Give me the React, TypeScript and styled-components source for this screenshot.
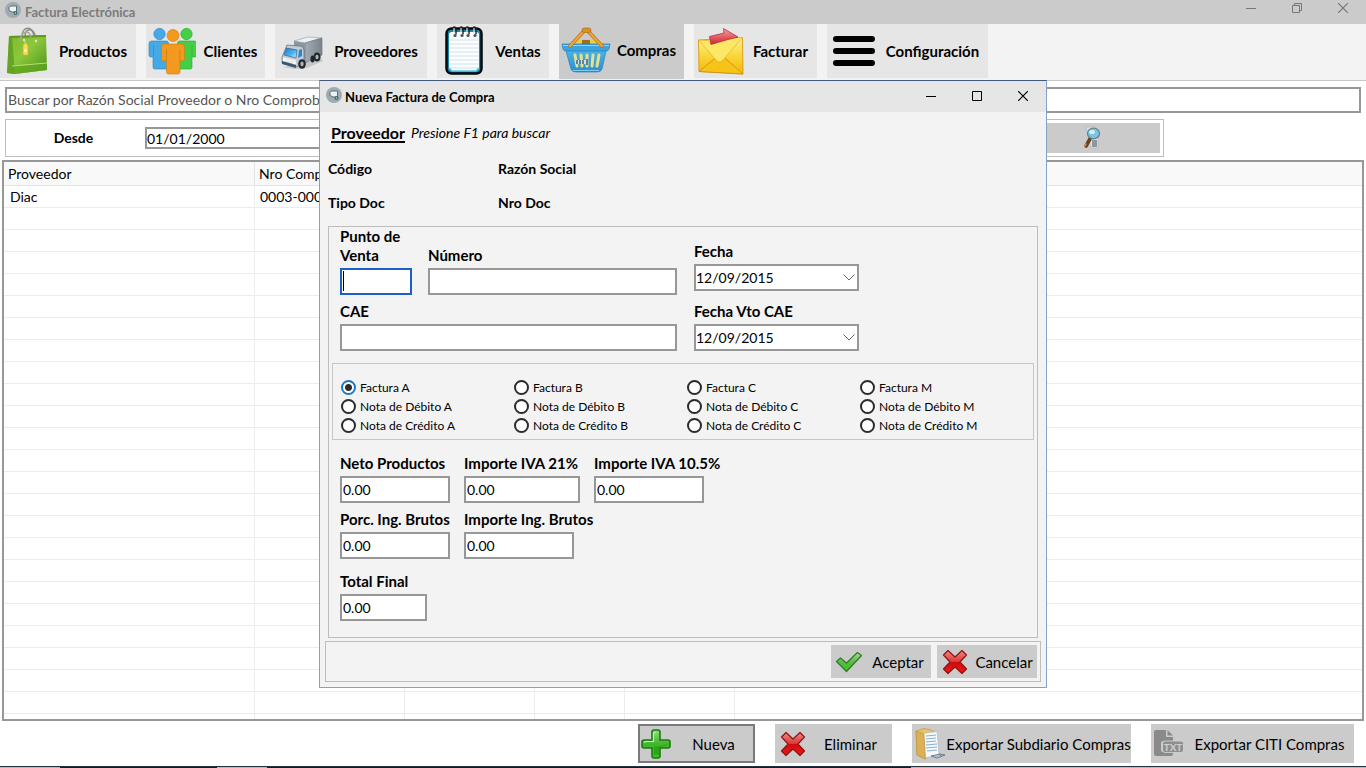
import React from "react";
import styled, { createGlobalStyle, css } from "styled-components";

const GlobalStyle = createGlobalStyle`
  *, *::before, *::after { box-sizing: border-box; }
  body {
    margin: 0;
    background: #fff;
    color: #000;
    font-family: Lato, "Open Sans", sans-serif;
    font-size: 14px;
    line-height: 20px;
  }
  button, input, select { font: inherit; color: inherit; border-radius: 0; margin: 0; }
  svg { display: block; flex: none; }
`;

/* ---------- Main window ---------- */

const Window = styled.div`
  display: flex;
  flex-direction: column;
  min-height: 100vh;
`;

const TitleBar = styled.header<{ $dialog?: boolean }>`
  display: flex;
  align-items: center;
  height: ${p => (p.$dialog ? 31 : 24)}px;
  padding-left: ${p => (p.$dialog ? 6 : 5)}px;
  gap: ${p => (p.$dialog ? 3 : 4)}px;
  background: ${p => (p.$dialog ? "#e6e6e6" : "#cbcbcb")};
  color: ${p => (p.$dialog ? "#000" : "#7b7b7b")};

  > svg { margin-bottom: 4px; }
`;

const TitleText = styled.h1`
  flex: 1;
  margin: 0;
  font-size: 13px;
  font-weight: 700;
  line-height: 20px;
`;

const CaptionButtons = styled.div<{ $dialog?: boolean }>`
  display: flex;
  padding-bottom: ${p => (p.$dialog ? 2 : 8)}px;
`;

const CaptionButton = styled.button`
  display: grid;
  place-items: center;
  width: 46px;
  height: 16px;
  padding: 0;
  border: 0;
  background: none;
`;

const Toolbar = styled.nav`
  display: flex;
  gap: 10px;
  height: 57px;
  background: #f3f3f3;
  border-bottom: 1px solid #c6c6c6;
`;

const ToolbarButton = styled.button<{ $width: number; $active?: boolean }>`
  display: flex;
  align-items: center;
  width: ${p => p.$width}px;
  height: ${p => (p.$active ? 55 : 54)}px;
  padding: ${p => (p.$active ? "0 0 4px" : "0")};
  border: 0;
  background: ${p => (p.$active ? "#cbcbcb" : "#e6e6e6")};
  font-size: 15px;
  font-weight: 700;
  white-space: nowrap;

  span { flex: 1; text-align: center; }
`;

const boxed = css`
  border: 2px solid #979797;
  background: #fff;
`;

const SearchInput = styled.input`
  ${boxed}
  height: 26px;
  margin: 6px 5px;
  padding: 0 1px 1px;

  &::placeholder { color: #555; opacity: 1; }
`;

const FilterPanel = styled.form`
  display: flex;
  align-items: center;
  width: 1159px;
  max-width: calc(100% - 10px);
  height: 38px;
  margin-left: 5px;
  padding-right: 3px;
  border: 1px solid #bdbdbd;
`;

const FilterLabel = styled.label`
  width: 139px;
  padding-right: 4px;
  text-align: center;
  font-weight: 700;
`;

const FilterDate = styled.input`
  ${boxed}
  width: 260px;
  height: 22px;
  padding: 0;
`;

const SearchButton = styled.button`
  display: grid;
  place-items: center;
  width: 136px;
  height: 30px;
  margin-left: auto;
  padding: 0;
  border: 0;
  background: #cbcbcb;
`;

const GridFrame = styled.main`
  flex: 1 1 0;
  min-height: 200px;
  margin: 3px 2px 0;
  overflow: hidden;
  border: 2px solid #979797;
`;

const DataTable = styled.table`
  width: 100%;
  table-layout: fixed;
  border-collapse: separate;
  border-spacing: 0;

  th, td {
    height: 22px;
    padding: 0 0 0 6px;
    border: 0 solid #ececec;
    border-width: 0 1px 1px 0;
    font-weight: 400;
    text-align: left;
    white-space: nowrap;
    line-height: 20px;
  }
  td + td { padding-left: 5px; }
  th {
    height: 24px;
    padding-left: 4px;
    border-color: #e4e4e4;
    background: #f9f9f9;
  }
  th:last-child, td:last-child { border-right: 0; }
`;

const FooterBar = styled.footer`
  display: flex;
  justify-content: flex-end;
  gap: 20px;
  padding: 3px 12px;
`;

const ActionButton = styled.button<{ $width: number; $tall?: boolean; $default?: boolean }>`
  display: flex;
  align-items: center;
  width: ${p => p.$width}px;
  height: ${p => (p.$tall ? 39 : 33)}px;
  padding: 0;
  border: 0;
  outline: ${p => (p.$default ? "2px solid #7a7a7a" : "none")};
  outline-offset: -2px;
  background: #cbcbcb;
  font-size: 15px;
  white-space: nowrap;

  span { flex: 1; text-align: center; }
`;

const IconCell = styled.i`
  display: grid;
  place-items: center;
  flex: none;
  width: 34px;
  padding-left: 2px;
`;

const ScreenEdge = styled.div`
  height: 2px;
  border-top: 1px solid #22303f;
  background: linear-gradient(
    to right,
    #a5bcd4 60px, #141c26 60px 217px, #a5bcd4 217px 267px, #141c26 267px 911px, #a5bcd4 911px
  );
`;

/* ---------- Dialog ---------- */

const Overlay = styled.div`
  position: absolute;
  inset: 0;
  display: flex;
  align-items: center;
  justify-content: center;
`;

const Dialog = styled.section`
  display: flex;
  flex-direction: column;
  width: 728px;
  border: 1px solid #86a1c2;
  border-top-color: #43587e;
  background: #f3f3f3;
`;

const ProviderHeading = styled.div`
  display: flex;
  align-items: center;
  gap: 6px;
  padding: 11px 11px 0;
`;

const ProviderTitle = styled.h2`
  margin: 0;
  font-size: 16px;
  line-height: 20px;
  text-decoration: underline 2px;
  text-underline-offset: 2px;
`;

const ProviderData = styled.dl`
  display: grid;
  grid-template-columns: 170px 1fr;
  row-gap: 14px;
  margin: 16px 8px 13px;

  dt { font-weight: 700; }
`;

const InvoiceGroup = styled.div`
  margin: 0 8px 3px;
  padding: 0 3px 16px;
  border: 1px solid #bdbdbd;
`;

const HeaderFields = styled.div`
  display: flex;
  gap: 17px;
  padding: 0 8px;
`;

const FieldColumn = styled.div<{ $gap: number; $top?: number }>`
  display: flex;
  flex-direction: column;
  gap: ${p => p.$gap}px;
  padding-top: ${p => p.$top ?? 0}px;
`;

const FieldRow = styled.div<{ $gap: number }>`
  display: flex;
  align-items: flex-end;
  gap: ${p => p.$gap}px;
`;

const FieldBox = styled.div<{ $width: number }>`
  display: flex;
  flex-direction: column;
  gap: 3px;
  width: ${p => p.$width}px;
`;

const FieldLabel = styled.label<{ $wrap?: boolean }>`
  font-size: 15px;
  font-weight: 700;
  line-height: 19px;
  white-space: ${p => (p.$wrap ? "normal" : "nowrap")};
`;

const FieldInput = styled.input<{ $focused?: boolean }>`
  ${boxed}
  width: 100%;
  height: 27px;
  padding: 0 1px 1px;
  ${p => p.$focused && css`
    border-color: #1d5fc4;
    background: linear-gradient(#000, #000) 1px 1px / 1px 20px no-repeat #fff;
  `}
`;

const DateBox = styled.div`
  display: grid;
  align-items: center;

  > * { grid-area: 1 / 1; }
  svg { justify-self: end; margin-right: 4px; pointer-events: none; }
`;

const DateSelect = styled.select`
  ${boxed}
  appearance: none;
  width: 100%;
  height: 27px;
  padding: 0;
`;

const TypeGroup = styled.fieldset`
  display: grid;
  grid-template-rows: repeat(3, 19px);
  grid-template-columns: 173px 173px 173px 1fr;
  grid-auto-flow: column;
  margin: 12px 0 14px;
  padding: 14px 8px 4px;
  border: 1px solid #c6c6c6;
`;

const RadioLabel = styled.label`
  display: flex;
  align-items: center;
  gap: 4px;
  font-size: 12px;
`;

const Radio = styled.input`
  appearance: none;
  width: 15px;
  height: 15px;
  border: 2px solid #2b2b2b;
  border-radius: 50%;
  background: #fff;

  &:checked {
    border-color: #1a78cc;
    background: radial-gradient(circle, #2b2b2b 3px, #fff 4px);
  }
`;

const Amounts = styled.div`
  display: flex;
  flex-direction: column;
  gap: 7px;
  padding: 0 8px;
`;

const TotalRow = styled.div`
  padding-top: 6px;
`;

const DialogActions = styled.footer`
  display: flex;
  justify-content: flex-end;
  gap: 6px;
  margin: 0 5px 5px;
  padding: 3px;
  border: 1px solid #bdbdbd;
`;

/* ---------- Icons ---------- */

const AppIcon = () => (
  <svg width="16" height="16" viewBox="0 0 16 16">
    <circle cx="8" cy="8" r="8" fill="#9dabb3" />
    <path d="M5.500 4h6v6H7L4 8.500V5.500z" fill="#eef2f3" stroke="#5f6f78" strokeWidth="1" />
    <circle cx="10.500" cy="11" r="2" fill="#3f6e6a" />
    <circle cx="10.500" cy="11" r=".7" fill="#cfe0de" />
  </svg>
);

const MinimizeIcon = ({ color }: { color: string }) => (
  <svg width="10" height="10"><path d="M0 5.500h10" stroke={color} /></svg>
);
const MaximizeIcon = ({ color }: { color: string }) => (
  <svg width="10" height="10"><path d="M.5.5h9v9h-9z" fill="none" stroke={color} /></svg>
);
const RestoreIcon = ({ color }: { color: string }) => (
  <svg width="10" height="10"><path d="M.5 2.500h7v7h-7zM2.500 2.500v-2h7v7h-2" fill="none" stroke={color} /></svg>
);
const CloseIcon = ({ color }: { color: string }) => (
  <svg width="10" height="10"><path d="M0 0l10 10M10 0l-10 10" stroke={color} strokeWidth="1.200" /></svg>
);
const ChevronIcon = () => (
  <svg width="12" height="7"><path d="M.5.5L6 6l5.500-5.500" fill="none" stroke="#666" /></svg>
);

const BagIcon = () => (
  <svg width="50" height="54" viewBox="0 0 50 54">
    <defs>
      <linearGradient id="bag" x1="0" y1="0" x2="1" y2="1">
        <stop offset="0" stopColor="#7fb82a" /><stop offset=".45" stopColor="#8cc83c" /><stop offset="1" stopColor="#4a9018" />
      </linearGradient>
    </defs>
    <path d="M22 13C22 2 32 1 34 12M25 12C25 3 35 3 36 16" fill="none" stroke="#8d8d86" strokeWidth="1.500" />
    <path d="M9 12L46 11L47 46L15 50L7 49Z" fill="url(#bag)" />
    <path d="M9 12L12 13L15 50L7 49Z" fill="#4f8c1c" opacity=".6" />
    <path d="M9 12L46 11L46 13L12 14Z" fill="#5c9a22" />
    <path d="M8 43L14 42L47 39L47 46L15 50L7 49Z" fill="#5fa51e" opacity=".7" />
    <path d="M12 42L47 39" stroke="#b8e070" strokeWidth="1" />
    <path d="M20 18C20 8 29 4 31 13" fill="none" stroke="#a6a69e" strokeWidth="1.500" />
    <circle cx="24" cy="16" r="1.200" fill="#dfe8cf" /><circle cx="36" cy="17" r="1.200" fill="#dfe8cf" />
    <path d="M25 16v4" stroke="#c9d8a4" />
    <path d="M23 21l2.500-2L28 21v10h-5z" fill="#f4dd52" stroke="#d9a82c" strokeWidth=".6" />
    <path d="M24 25h3v3h-3z" fill="#f7ecb0" />
  </svg>
);

const PeopleIcon = () => (
  <svg width="50" height="54" viewBox="0 0 50 54">
    <g fill="#45a9e6" stroke="#2b83bd" strokeWidth=".6">
      <circle cx="13.500" cy="10" r="5.700" />
      <path d="M5.500 17h15q2 0 2 2v26h-14q-1.500 0-1.500-2V33H5q-2 0-2-2V20q0-3 2.500-3z" />
    </g>
    <g fill="#45cf45" stroke="#2da32f" strokeWidth=".6">
      <circle cx="40.500" cy="10" r="5.700" />
      <path d="M48.500 17h-15q-2 0-2 2v26h13q1.500 0 1.500-2V33h2.500q2 0 2-2V20q0-3-2-3z" />
    </g>
    <g fill="#f39a1e" stroke="#c97a10" strokeWidth=".6">
      <circle cx="27" cy="11.500" r="6" />
      <path d="M18 20h18q2.500 0 2.500 3v12q0 2-2 2H34v11q0 2-2 2H22.500q-2 0-2-2V37H18q-2.500 0-2.500-2V23q0-3 2.500-3z" />
    </g>
    <path d="M7.500 21v11M46 21v11M20.500 25v12M33.800 25v12" stroke="#0002" />
  </svg>
);

const TruckIcon = () => (
  <svg width="50" height="54" viewBox="0 0 50 54">
    <defs>
      <linearGradient id="box" x1="0" x2="1"><stop offset="0" stopColor="#a4adb5" /><stop offset="1" stopColor="#77828c" /></linearGradient>
      <linearGradient id="glass" x1="0" y1="0" x2="1" y2="1"><stop offset="0" stopColor="#1978d0" /><stop offset=".6" stopColor="#4fb6f2" /><stop offset="1" stopColor="#d4f2ff" /></linearGradient>
    </defs>
    <path d="M8 43l38-9 2 3-16 7-12 1z" fill="#0002" />
    <path d="M19 17L33 13L47 14L30 19Z" fill="#eef1f3" stroke="#8e979f" strokeWidth=".6" />
    <path d="M30 19L47 14V31L30 39Z" fill="url(#box)" stroke="#69747e" strokeWidth=".6" />
    <path d="M19 17L30 19V39L19 30Z" fill="#8c969f" />
    <path d="M12 21L24 22Q29 22 29 27V39L21 43L7 39V33Z" fill="#c3cbd2" stroke="#5e6972" strokeWidth=".7" />
    <path d="M11.500 24L22 26L21 34L9 31Z" fill="url(#glass)" stroke="#24547c" strokeWidth=".6" />
    <path d="M24 26l3-1v7l-4 2z" fill="#2a86cf" />
    <path d="M8 33l13 3v4L8 37z" fill="#e9edf0" />
    <path d="M7 37l14 4v3L7 40z" fill="#38586f" />
    <circle cx="9" cy="36" r="1.200" fill="#fff" /><circle cx="19.500" cy="39" r="1.200" fill="#fff" />
    <g fill="#20262b"><ellipse cx="27" cy="40" rx="3.800" ry="4.800" /><ellipse cx="42" cy="33" rx="3.600" ry="4.600" /><ellipse cx="37.500" cy="35" rx="2" ry="3.500" /></g>
    <g fill="#aab3ba"><ellipse cx="27" cy="40" rx="1.700" ry="2.400" /><ellipse cx="42" cy="33" rx="1.600" ry="2.300" /></g>
  </svg>
);

const NotepadIcon = () => (
  <svg width="50" height="54" viewBox="0 0 50 54">
    <rect x="9.500" y="4.500" width="35" height="45" rx="5" fill="#1a86a8" stroke="#05090c" strokeWidth="2.500" />
    <path d="M12 11q0-3 3-3h24q3 0 3 3v33l-3 3H15l-3-3z" fill="#fbfdfe" />
    <path d="M12 16h30M12 20h30M12 24h30M12 28h30M12 32h30M12 36h30M12 40h30M12 44h30" stroke="#cde4ee" />
    <path d="M12 44l3 3h24l3-3" fill="none" stroke="#5fc8e0" strokeWidth="1.500" />
    {[17, 24, 30, 37].map(x => (
      <g key={x}>
        <path d={`M${x - 1} 3.500q3-1.500 3 2v5`} fill="none" stroke="#222" strokeWidth="1.400" />
        <path d={`M${x} 4v6`} stroke="#e8e8e8" strokeWidth="1.200" />
        <circle cx={x + 1} cy="11.500" r="1.600" fill="#4b5960" />
      </g>
    ))}
  </svg>
);

const BasketIcon = () => (
  <svg width="50" height="54" viewBox="0 0 50 54" overflow="visible">
    <defs>
      <linearGradient id="basket" x1="0" y1="0" x2="0" y2="1"><stop offset="0" stopColor="#4eb6ea" /><stop offset="1" stopColor="#2c8fd0" /></linearGradient>
    </defs>
    <path d="M14 20l5-4h20l5 4v3H14z" fill="#e7cf55" />
    <path d="M23 17h8v4h-8z" fill="#9b6f1d" />
    <path d="M6.500 26H47.500L43 46Q42 49 38 49H17Q13 49 12 46Z" fill="url(#basket)" stroke="#2a7fb5" strokeWidth=".7" />
    <path d="M3 21H51L50 26Q49.500 28 47 28H7Q4.500 28 4 26Z" fill="#3ba4df" stroke="#2a7fb5" strokeWidth=".7" />
    <path d="M4 22.500h46" stroke="#8fd6f7" />
    <path d="M11 23L26 7M43 23L28 7" fill="none" stroke="#b8721a" strokeWidth="3.600" strokeLinecap="round" />
    <path d="M11 23L26 7M43 23L28 7" fill="none" stroke="#f0a53a" strokeWidth="2.200" strokeLinecap="round" />
    <rect x="23" y="5" width="9" height="4.500" rx="2" fill="#d98f2c" stroke="#a9681a" strokeWidth=".6" />
    <path d="M16 32l2 11M22 32l1 11M28 32v11M34 32l-1 11M40 32l-2 11" stroke="#e6e08a" strokeWidth="3" strokeLinecap="round" />
    <path d="M16 37h12v4H17z" fill="#cfe3ee" />
    <path d="M18 37v4M21 37v4M24 37v4M28 36v6" stroke="#24404f" strokeWidth="1.200" />
    <path d="M14 47.500h26" stroke="#7fcdf2" />
  </svg>
);

const EnvelopeIcon = () => (
  <svg width="50" height="54" viewBox="0 0 50 54">
    <defs>
      <linearGradient id="env" x1="0" y1="0" x2="0" y2="1"><stop offset="0" stopColor="#fff0a0" /><stop offset=".5" stopColor="#fbd638" /><stop offset="1" stopColor="#f3b606" /></linearGradient>
      <linearGradient id="arrow" x1="0" y1="0" x2="0" y2="1"><stop offset="0" stopColor="#f3a0a4" /><stop offset="1" stopColor="#d4222c" /></linearGradient>
    </defs>
    <path d="M4.500 16L48.500 13.500L49 50L5 47.500Z" fill="url(#env)" stroke="#d79a12" strokeWidth=".9" />
    <path d="M5 47.500L21 34L26 38L31 34L49 50Z" fill="#f6c418" stroke="#c98d10" strokeWidth=".8" />
    <path d="M4.500 16L17 17L45 13.500L48.500 13.500L29 36Q25.500 40 22 36Z" fill="#fde766" stroke="#e8b52a" strokeWidth=".8" />
    <path d="M15.500 12.500L30 9L29.500 4.500L44 13L34 15.500L17 20.500Z" fill="url(#arrow)" stroke="#b9303a" strokeWidth=".8" />
  </svg>
);

const BarsIcon = () => (
  <svg width="50" height="54" viewBox="0 0 50 54">
    <path d="M9 15h36M9 27h36M9 39h36" stroke="#000" strokeWidth="6" strokeLinecap="round" />
  </svg>
);

const MagnifierIcon = () => (
  <svg width="18" height="24" viewBox="0 0 18 24">
    <path d="M3 1h9l3 4v17H8z" fill="#dfe3e6" stroke="#aab0b5" strokeWidth=".6" />
    <path d="M9 14h5v7H9z" fill="#8f979e" />
    <path d="M7 13l-4 7" stroke="#6b3f1a" strokeWidth="3.600" strokeLinecap="round" />
    <path d="M3 18l-1 2" stroke="#c99a4c" strokeWidth="1.500" strokeLinecap="round" />
    <ellipse cx="10.500" cy="7.500" rx="6" ry="5.300" fill="#7cc4e4" stroke="#64808f" strokeWidth="1.200" />
    <ellipse cx="9" cy="6" rx="3" ry="2" fill="#d5f0fa" />
  </svg>
);

const PlusIcon = () => (
  <svg width="30" height="30" viewBox="0 0 30 30">
    <defs>
      <linearGradient id="plus" x1="0" y1="0" x2="0" y2="1"><stop offset="0" stopColor="#8fdc7c" /><stop offset=".5" stopColor="#42b52c" /><stop offset="1" stopColor="#3cc41a" /></linearGradient>
    </defs>
    <path d="M13 1h4q2 0 2 2v8h8q2 0 2 2v4q0 2-2 2h-8v8q0 2-2 2h-4q-2 0-2-2v-8H3q-2 0-2-2v-4q0-2 2-2h8V3q0-2 2-2z" fill="url(#plus)" stroke="#1b7a14" strokeWidth="1.600" />
    <path d="M3.500 14q0-1.500 1.500-1.500h7.500V4.500q0-1 2.500-1" fill="none" stroke="#c3f2b6" strokeWidth="1.200" />
    <path d="M13 17q8 1 14-3-1 3-9 4v8h-5z" fill="#1f9410" opacity=".6" />
  </svg>
);

const CrossIcon = () => (
  <svg width="26" height="26" viewBox="0 0 26 26">
    <defs>
      <linearGradient id="cross" x1="0" y1="0" x2="0" y2="1"><stop offset="0" stopColor="#f08a86" /><stop offset=".48" stopColor="#d93a38" /><stop offset=".52" stopColor="#d00a0c" /><stop offset="1" stopColor="#f01a14" /></linearGradient>
    </defs>
    <path d="M6 1.500L13 8L20 1.500L24.500 6L18 13L24.500 20L20 24.500L13 18L6 24.500L1.500 20L8 13L1.500 6Z" fill="url(#cross)" stroke="#8e1416" strokeWidth="1.200" strokeLinejoin="round" />
  </svg>
);

const CheckIcon = () => (
  <svg width="28" height="22" viewBox="0 0 28 22">
    <defs>
      <linearGradient id="check" x1="0" y1="0" x2="0" y2="1"><stop offset="0" stopColor="#a8dc98" /><stop offset=".5" stopColor="#5cb84a" /><stop offset="1" stopColor="#3cc41a" /></linearGradient>
    </defs>
    <path d="M1.500 10.500L5.500 7L11.500 12L22.500 1.500L26.500 4.500L11.500 20.500Z" fill="url(#check)" stroke="#2b7d20" strokeWidth="1.200" strokeLinejoin="round" />
  </svg>
);

const FolderIcon = () => (
  <svg width="31" height="32" viewBox="0 0 31 32">
    <path d="M1 3L9 .500L16 2L20 4V25L10 31L2 27Z" fill="#e8c36c" stroke="#b98f3c" strokeWidth=".6" />
    <path d="M8 5.500L22 3.500L24 27L10 30Z" fill="#f6f9fb" stroke="#a9b8c4" strokeWidth=".6" />
    <path d="M11 8l10-1M11 11l10-1M11 14l10-1M11 17l11-1M11 20l11-1M12 23l10-1" stroke="#8db0cf" strokeWidth="1.200" />
    <path d="M1 3L9 6L10.500 31L2 27Z" fill="#dcb056" stroke="#b98f3c" strokeWidth=".6" />
    <path d="M16 28l9-2 5 1-8 3zM24 26l3 3" fill="#b7c2cc" stroke="#5d6b78" strokeWidth=".8" />
  </svg>
);

const TxtFileIcon = () => (
  <svg width="31" height="27" viewBox="0 0 31 27">
    <path d="M0 2q0-2 2-2h10v7h7v4H9q-2 0-2 2v7q0 2 2 2h10v2q0 2-2 2H2q-2 0-2-2zM13.500 0L19 5.500h-5.500z" fill="#8a8a8a" />
    <rect x="8.500" y="11" width="21" height="11.500" rx="2.500" fill="#8f8f8f" stroke="#d8d8d8" strokeWidth=".8" />
    <text x="19" y="20.500" textAnchor="middle" fontFamily="Lato, sans-serif" fontSize="10" fontStyle="normal" fontWeight="700" fill="#d0d0d0">TXT</text>
  </svg>
);

/* ---------- Parts ---------- */

const toolbarItems = [
  { label: "Productos", width: 136, icon: <BagIcon /> },
  { label: "Clientes", width: 119, icon: <PeopleIcon /> },
  { label: "Proveedores", width: 152, icon: <TruckIcon /> },
  { label: "Ventas", width: 112, icon: <NotepadIcon /> },
  { label: "Compras", width: 125, icon: <BasketIcon />, active: true },
  { label: "Facturar", width: 123, icon: <EnvelopeIcon /> },
  { label: "Configuración", width: 161, icon: <BarsIcon /> },
];

const columnWidths = [251, 150, 130, 90, 110];
const emptyRows = Array.from({ length: 24 }, (_, i) => i);
const voucherTypes = ["A", "B", "C", "M"].flatMap(letter =>
  ["Factura", "Nota de Débito", "Nota de Crédito"].map(kind => `${kind} ${letter}`),
);

type FieldProps = { id: string; label: string; width: number; value?: string; focused?: boolean; wrap?: boolean };

const Field = ({ id, label, width, value = "", focused, wrap }: FieldProps) => (
  <FieldBox $width={width}>
    <FieldLabel htmlFor={id} $wrap={wrap}>{label}</FieldLabel>
    <FieldInput id={id} defaultValue={value} $focused={focused} />
  </FieldBox>
);

const DateField = ({ id, label }: { id: string; label: string }) => (
  <FieldBox $width={165}>
    <FieldLabel htmlFor={id}>{label}</FieldLabel>
    <DateBox>
      <DateSelect id={id}><option>12/09/2015</option></DateSelect>
      <ChevronIcon />
    </DateBox>
  </FieldBox>
);

const PurchaseDialog = () => (
  <Overlay>
    <Dialog role="dialog" aria-labelledby="dialog-title">
      <TitleBar $dialog>
        <AppIcon />
        <TitleText as="h2" id="dialog-title">Nueva Factura de Compra</TitleText>
        <CaptionButtons $dialog>
          <CaptionButton aria-label="Minimizar"><MinimizeIcon color="#000" /></CaptionButton>
          <CaptionButton aria-label="Maximizar"><MaximizeIcon color="#000" /></CaptionButton>
          <CaptionButton aria-label="Cerrar"><CloseIcon color="#000" /></CaptionButton>
        </CaptionButtons>
      </TitleBar>
      <ProviderHeading>
        <ProviderTitle>Proveedor</ProviderTitle>
        <em>Presione F1 para buscar</em>
      </ProviderHeading>
      <ProviderData>
        <dt>Código</dt><dt>Razón Social</dt>
        <dt>Tipo Doc</dt><dt>Nro Doc</dt>
      </ProviderData>
      <InvoiceGroup>
        <HeaderFields>
          <FieldColumn $gap={7}>
            <FieldRow $gap={16}>
              <Field id="punto" label="Punto de Venta" width={72} focused wrap />
              <Field id="numero" label="Número" width={249} />
            </FieldRow>
            <Field id="cae" label="CAE" width={337} />
          </FieldColumn>
          <FieldColumn $gap={11} $top={15}>
            <DateField id="fecha" label="Fecha" />
            <DateField id="vto" label="Fecha Vto CAE" />
          </FieldColumn>
        </HeaderFields>
        <TypeGroup aria-label="Tipo de comprobante">
          {voucherTypes.map((name, i) => (
            <RadioLabel key={name}>
              <Radio type="radio" name="tipo" defaultChecked={i === 0} />
              {name}
            </RadioLabel>
          ))}
        </TypeGroup>
        <Amounts>
          <FieldRow $gap={14}>
            <Field id="neto" label="Neto Productos" width={110} value="0.00" />
            <Field id="iva21" label="Importe IVA 21%" width={116} value="0.00" />
            <Field id="iva10" label="Importe IVA 10.5%" width={110} value="0.00" />
          </FieldRow>
          <FieldRow $gap={14}>
            <Field id="porc" label="Porc. Ing. Brutos" width={110} value="0.00" />
            <Field id="brutos" label="Importe Ing. Brutos" width={110} value="0.00" />
          </FieldRow>
          <TotalRow>
            <Field id="total" label="Total Final" width={87} value="0.00" />
          </TotalRow>
        </Amounts>
      </InvoiceGroup>
      <DialogActions>
        <ActionButton $width={100}><IconCell><CheckIcon /></IconCell><span>Aceptar</span></ActionButton>
        <ActionButton $width={100}><IconCell><CrossIcon /></IconCell><span>Cancelar</span></ActionButton>
      </DialogActions>
    </Dialog>
  </Overlay>
);

export default function App() {
  return (
    <>
      <GlobalStyle />
      <Window>
        <TitleBar>
          <AppIcon />
          <TitleText>Factura Electrónica</TitleText>
          <CaptionButtons>
            <CaptionButton aria-label="Minimizar"><MinimizeIcon color="#777" /></CaptionButton>
            <CaptionButton aria-label="Restaurar"><RestoreIcon color="#777" /></CaptionButton>
            <CaptionButton aria-label="Cerrar"><CloseIcon color="#777" /></CaptionButton>
          </CaptionButtons>
        </TitleBar>
        <Toolbar>
          {toolbarItems.map(item => (
            <ToolbarButton key={item.label} $width={item.width} $active={item.active}>
              {item.icon}
              <span>{item.label}</span>
            </ToolbarButton>
          ))}
        </Toolbar>
        <SearchInput
          aria-label="Buscar"
          placeholder="Buscar por Razón Social Proveedor o Nro Comprobante"
        />
        <FilterPanel>
          <FilterLabel htmlFor="desde">Desde</FilterLabel>
          <FilterDate id="desde" defaultValue="01/01/2000" />
          <SearchButton type="button" aria-label="Filtrar"><MagnifierIcon /></SearchButton>
        </FilterPanel>
        <GridFrame>
          <DataTable>
            <colgroup>
              {columnWidths.map((w, i) => <col key={i} width={w} />)}
              <col />
            </colgroup>
            <thead>
              <tr><th>Proveedor</th><th>Nro Comp</th><th /><th /><th /><th /></tr>
            </thead>
            <tbody>
              <tr><td>Diac</td><td>0003-0000</td><td /><td /><td /><td /></tr>
              {emptyRows.map(i => (
                <tr key={i}><td /><td /><td /><td /><td /><td /></tr>
              ))}
            </tbody>
          </DataTable>
        </GridFrame>
        <FooterBar>
          <ActionButton $width={117} $tall $default><IconCell><PlusIcon /></IconCell><span>Nueva</span></ActionButton>
          <ActionButton $width={117} $tall><IconCell><CrossIcon /></IconCell><span>Eliminar</span></ActionButton>
          <ActionButton $width={219} $tall><IconCell><FolderIcon /></IconCell><span>Exportar Subdiario Compras</span></ActionButton>
          <ActionButton $width={203} $tall><IconCell><TxtFileIcon /></IconCell><span>Exportar CITI Compras</span></ActionButton>
        </FooterBar>
        <ScreenEdge />
      </Window>
      <PurchaseDialog />
    </>
  );
}
